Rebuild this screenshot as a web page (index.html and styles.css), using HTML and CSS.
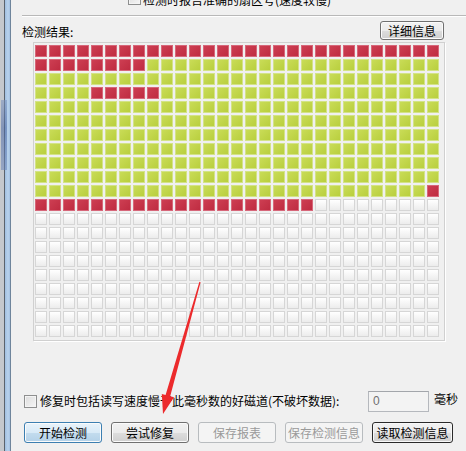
FILE: index.html
```html
<!DOCTYPE html>
<html lang="zh-CN">
<head>
<meta charset="utf-8">
<title>检测</title>
<link rel="stylesheet" href="styles.css">
</head>
<body>
<div class="window">
  <div class="frame"><span class="frame-mark"></span></div>
  <div class="content">
    <div class="top-option">
      <span class="checkbox"></span>
      <span class="top-label">检测时报告准确的扇区号(速度较慢)</span>
    </div>
    <div class="separator"></div>
    <div class="result-header">
      <span class="result-label">检测结果:</span>
      <button class="btn btn-detail">详细信息</button>
    </div>
    <div class="grid-box">
      <div class="grid" id="grid"></div>
    </div>
    <div class="repair-row">
      <div class="repair-option">
        <span class="checkbox"></span>
        <span class="repair-label">修复时包括读写速度慢于此毫秒数的好磁道(不破坏数据):</span>
      </div>
      <div class="ms-input">0</div>
      <span class="ms-unit">毫秒</span>
    </div>
    <div class="button-row">
      <button class="btn btn-primary">开始检测</button>
      <button class="btn">尝试修复</button>
      <button class="btn btn-disabled">保存报表</button>
      <button class="btn btn-disabled">保存检测信息</button>
      <button class="btn btn-focus">读取检测信息</button>
    </div>
  </div>
  <svg class="arrow" width="466" height="451" viewBox="0 0 466 451">
    <polygon points="199.4,281.8 200.6,282.2 170.2,396.3 174,397.3 163,414 161.8,393.9 165.6,394.9" fill="#ec2a2c"/>
  </svg>
</div>
<script src="script.js"></script>
</body>
</html>
```

FILE: styles.css
```css
* { box-sizing: border-box; }
html, body {
  margin: 0;
  padding: 0;
}
body {
  width: 466px;
  height: 451px;
  overflow: hidden;
  background: #f0f0f0;
  font-family: "Noto Sans CJK SC", "Liberation Sans", sans-serif;
  font-size: 12px;
  color: #000;
}
.window {
  position: relative;
  display: flex;
  height: 451px;
}
.frame {
  flex: none;
  width: 11px;
  height: 451px;
  position: relative;
  background: linear-gradient(to right, #c4c8cc 0, #c4c8cc 4px, #5a636c 4px, #5a636c 5px, #9fbfe0 5px, #b8d2ec 8px, #a4c2e2 10px, #6f859c 10px, #6f859c 11px);
}
.frame-mark {
  position: absolute;
  left: 1px;
  top: 100px;
  width: 6px;
  height: 70px;
  background: linear-gradient(#7b93c0, #4d6aa6 40%, #6e88bc);
  opacity: 0.55;
}
.content {
  flex: 1;
  padding-left: 11px;
}
.checkbox {
  display: inline-block;
  flex: none;
  width: 13px;
  height: 13px;
  border: 1px solid #8e8f8f;
  background: linear-gradient(135deg, #dcdcdc, #f6f6f6);
  box-shadow: inset 0 0 0 1px #f4f4f4;
}
.top-option {
  margin-top: -8px;
  height: 13px;
  padding-left: 106px;
  display: flex;
  align-items: flex-start;
}
.top-label {
  margin-left: 2px;
  line-height: 15px;
  white-space: nowrap;
}
.separator {
  margin-top: 10px;
  height: 2px;
  border-top: 1px solid #b8b8b8;
  border-bottom: 1px solid #ffffff;
}
.result-header {
  margin-top: 4px;
  width: 422px;
  height: 19px;
  display: flex;
  justify-content: space-between;
  align-items: flex-end;
}
.result-label {
  line-height: 14px;
  margin-bottom: 1px;
}
.btn {
  font-family: "Noto Sans CJK SC", "Liberation Sans", sans-serif;
  font-size: 12px;
  line-height: 14px;
  color: #000;
  height: 21px;
  width: 78px;
  padding: 0;
  border: 1px solid #707070;
  border-radius: 3px;
  background: linear-gradient(#f2f2f2 0%, #ebebeb 50%, #dddddd 51%, #cfcfcf 100%);
  box-shadow: inset 0 0 0 1px #fbfbfb;
}
.btn-detail {
  width: 64px;
  height: 19px;
}
.btn-primary {
  border-color: #3c7fb1;
  background: linear-gradient(#e9f3fa 0%, #d8eaf7 50%, #c3dcee 51%, #b3d1e8 100%);
}
.btn-disabled {
  color: #9a9a9a;
  border-color: #b8bcbf;
  background: #f4f4f4;
  box-shadow: none;
}
.btn-focus {
  width: 81px;
  border-color: #2a2a2a;
  box-shadow: inset 0 0 0 1px #f8f8f8;
}
.grid-box {
  margin-top: 2px;
  margin-left: 11px;
  width: 412px;
  height: 299px;
  border: 1px solid #d0d0d0;
  box-shadow: 1px 1px 0 #ffffff;
  padding: 2px 0 0 1px;
}
.grid {
  display: grid;
  grid-template-columns: repeat(29, 12px);
  grid-auto-rows: 12px;
  gap: 2px;
}
.cell {
  width: 12px;
  height: 12px;
}
.cell-bad {
  border: 1px solid #d7677a;
  background: linear-gradient(135deg, #cd3e52, #bf2c41);
}
.cell-ok {
  border: 1px solid #d3e387;
  background: linear-gradient(135deg, #c9dc57, #b9cf3e);
}
.cell-empty {
  border: 1px solid #d6d6d6;
  background: linear-gradient(#ffffff, #ececec);
}
.repair-row {
  margin-top: 48px;
  margin-left: 2px;
  height: 24px;
  display: flex;
  align-items: center;
}
.repair-option {
  width: 344px;
  display: flex;
  align-items: center;
}
.repair-label {
  margin-left: 3px;
  line-height: 14px;
  white-space: nowrap;
}
.ms-input {
  width: 61px;
  height: 21px;
  border: 1px solid #b5b8bd;
  border-top-color: #a3a6ab;
  background: #f3f3f3;
  color: #707070;
  font-family: "Liberation Sans", sans-serif;
  font-size: 12px;
  line-height: 19px;
  padding-left: 4px;
}
.ms-unit {
  margin-left: 5px;
  line-height: 14px;
  margin-bottom: 5px;
}
.button-row {
  margin-top: 9px;
  margin-left: 2px;
  display: flex;
  gap: 9px;
}
.arrow {
  position: absolute;
  left: 0;
  top: 0;
  pointer-events: none;
}
```

FILE: script.js
```js
(function () {
  var R = 'R', G = 'G', W = 'W';
  function rep(c, n) { return new Array(n + 1).join(c); }
  var rows = [
    rep(R, 29),
    rep(R, 8) + rep(G, 21),
    rep(G, 29),
    rep(G, 4) + rep(R, 5) + rep(G, 20),
    rep(G, 29),
    rep(G, 29),
    rep(G, 29),
    rep(G, 29),
    rep(G, 29),
    rep(G, 29),
    rep(G, 28) + R,
    rep(R, 20) + rep(W, 9)
  ];
  while (rows.length < 21) rows.push(rep(W, 29));
  var cls = { R: 'cell cell-bad', G: 'cell cell-ok', W: 'cell cell-empty' };
  var grid = document.getElementById('grid');
  var frag = document.createDocumentFragment();
  rows.forEach(function (row) {
    for (var i = 0; i < row.length; i++) {
      var d = document.createElement('div');
      d.className = cls[row[i]];
      frag.appendChild(d);
    }
  });
  grid.appendChild(frag);
})();
```
